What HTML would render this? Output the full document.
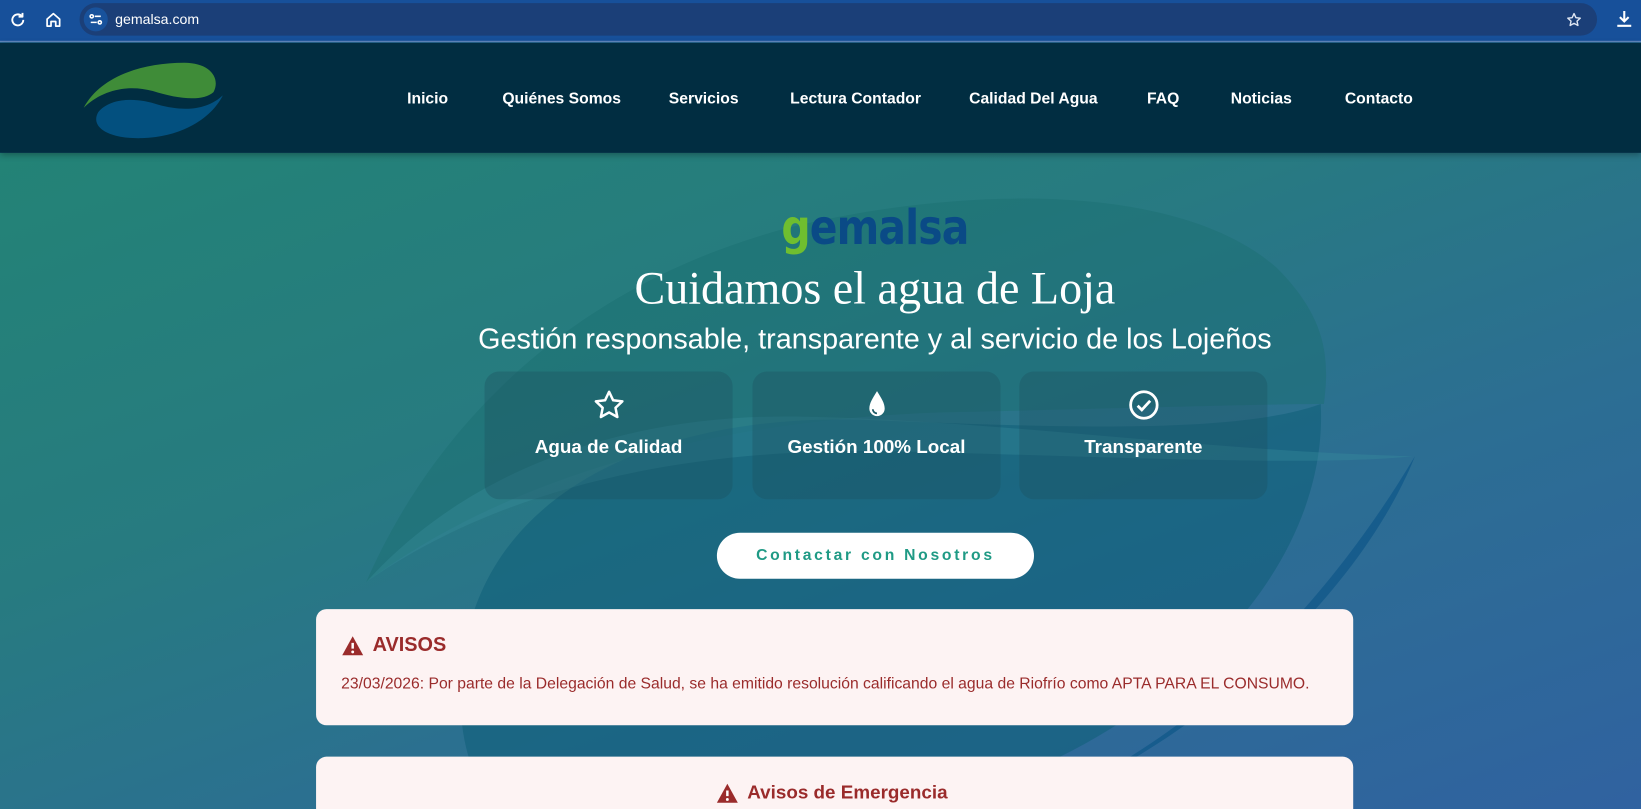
<!DOCTYPE html>
<html><head><meta charset="utf-8">
<style>
*{margin:0;padding:0;box-sizing:border-box}
html,body{width:1641px;height:809px;overflow:hidden}
body{font-family:"Liberation Sans",sans-serif;background:#2b6a95}
.wrap{position:absolute;left:0;top:0;width:1568px;height:773px;transform:scale(1.04656);transform-origin:0 0;overflow:hidden}
.chrome{position:absolute;left:0;top:0;width:1568px;height:40px;background:#17509a;border-bottom:1px solid #6a8fc4}
.url{position:absolute;left:76px;top:3px;width:1450px;height:31px;border-radius:16px;background:#1b3f78}
.url .tune{position:absolute;left:4px;top:4px;width:23px;height:23px;border-radius:12px;background:#18529c}
.url span{position:absolute;left:34px;top:8px;color:#fff;font-size:13.5px}
.nav{position:absolute;left:0;top:41px;width:1568px;height:105px;background:#012d41;box-shadow:0 2px 6px rgba(0,0,0,.3);z-index:3}
.nav a{position:absolute;top:45px;color:#fff;font-weight:bold;font-size:15px;text-decoration:none}
.hero{position:absolute;left:0;top:146px;width:1568px;height:627px;overflow:hidden;background:linear-gradient(160deg,#238376 0%,#277b80 35%,#2c6e93 65%,#3062a0 100%)}
.wm{position:absolute;left:0;top:0}
.brand{position:absolute;left:104px;width:1464px;top:44px;text-align:center;font-size:46px;font-weight:bold;letter-spacing:-1px;font-family:"DejaVu Sans",sans-serif;transform:scaleX(.85)}
h1{position:absolute;left:104px;width:1464px;top:104px;text-align:center;color:#fff;font-family:"Liberation Serif",serif;font-weight:normal;font-size:44px}
h2{position:absolute;left:104px;width:1464px;top:162px;text-align:center;color:#fff;font-weight:normal;font-size:27.5px}
.card{position:absolute;top:209px;width:237px;height:122px;border-radius:14px;background:rgba(30,80,95,.35);text-align:center;color:#fff;font-size:18px;font-weight:bold}
.card svg{position:absolute;left:103px;top:16px}
.card div{position:absolute;left:0;width:100%;top:62px}
.btn{position:absolute;left:685px;top:363px;width:303px;height:44px;border-radius:22px;background:#fff;color:#1f9a85;font-weight:bold;font-size:15px;letter-spacing:2.6px;text-align:center;line-height:44px}
.box{position:absolute;left:302px;width:991px;background:#fdf3f3;border-radius:10px;color:#9a2b2b}
.box h3{font-size:19px;font-weight:bold;position:absolute;left:24px;top:24px;display:flex;align-items:center;gap:8px}
.box p{position:absolute;left:24px;top:63px;font-size:15px;white-space:nowrap}
</style></head><body>
<div class="wrap">
<div class="chrome">
  <svg style="position:absolute;left:8px;top:10px" width="18" height="18" viewBox="0 0 24 24" fill="none" stroke="#fff" stroke-width="2.4"><path d="M19 12a7 7 0 1 1-2.1-5"/><path d="M18 3v5h-5" stroke-linejoin="round"/></svg>
  <svg style="position:absolute;left:42px;top:10px" width="18" height="18" viewBox="0 0 24 24" fill="none" stroke="#fff" stroke-width="2.2"><path d="M4 11l8-7 8 7v9h-5v-6h-6v6H4z" stroke-linejoin="round"/></svg>
  <div class="url"><div class="tune"><svg width="23" height="23" viewBox="0 0 24 24" stroke="#fff" stroke-width="1.6" fill="none"><circle cx="8" cy="9" r="1.6"/><path d="M11 9h6M7 15h6"/><circle cx="16" cy="15" r="1.6"/></svg></div><span>gemalsa.com</span>
  <svg style="position:absolute;right:14px;top:8px" width="16" height="16" viewBox="0 0 24 24" fill="none" stroke="#dfe6f2" stroke-width="2"><path d="M12 3l2.7 5.8 6.3.7-4.7 4.3 1.3 6.2L12 16.9 6.4 20l1.3-6.2L3 9.5l6.3-.7z" stroke-linejoin="round"/></svg></div>
  <svg style="position:absolute;left:1542px;top:8px" width="20" height="20" viewBox="0 0 24 24" fill="none" stroke="#fff" stroke-width="2.4"><path d="M12 3v11M7 10l5 5 5-5M4 20h16"/></svg>
</div>
<div class="nav">
  <svg style="position:absolute;left:76px;top:14px" width="140" height="80" viewBox="0 0 140 80">
    <path d="M4 48 C20 18 60 5 100 5 C125 5 135 20 128 33 C118 42 95 40 70 32 C45 25 20 32 4 48Z" fill="#3f8c38"/>
    <path d="M137 36 C125 60 95 76 60 77 C25 78 10 65 18 52 C30 38 55 38 75 45 C100 52 122 50 137 36Z" fill="#03507f"/>
  </svg>
  <a style="left:389px">Inicio</a><a style="left:480px">Quiénes Somos</a><a style="left:639px">Servicios</a><a style="left:755px">Lectura Contador</a><a style="left:926px">Calidad Del Agua</a><a style="left:1096px">FAQ</a><a style="left:1176px">Noticias</a><a style="left:1285px">Contacto</a>
</div>
<div class="hero">
  <svg class="wm" width="1568" height="627" viewBox="0 0 1568 627">
    <path d="M350 410 C420 250 560 120 760 70 C930 30 1130 30 1220 110 C1270 160 1270 200 1265 240 C1200 240 1050 245 900 248 C700 255 500 300 350 410Z" fill="#1a6f72" opacity=".45"/>
    <path d="M440 520 C440 330 620 250 820 255 C1000 262 1180 270 1262 240 C1270 400 1120 540 960 600 C800 663 620 680 520 663 C470 640 440 590 440 520Z" fill="#0f5f78" opacity=".55"/>
    <path d="M350 410 C450 300 600 250 760 252 C950 255 1150 285 1350 290 C1250 300 1050 290 850 285 C650 282 480 320 350 410Z" fill="#3a8f9f" opacity=".35"/>
    <path d="M1352 290 C1300 420 1150 560 1000 620 C1130 560 1250 460 1352 290Z" fill="#11598a" opacity=".8"/>
  </svg>
  <div class="brand"><span style="color:#6fbe2f">g</span><span style="color:#0a4a86">emalsa</span></div>
  <h1>Cuidamos el agua de Loja</h1>
  <h2>Gestión responsable, transparente y al servicio de los Lojeños</h2>
  <div class="card" style="left:463px"><svg width="32" height="32" viewBox="0 0 24 24" fill="none" stroke="#fff" stroke-width="1.8"><path d="M12 2.5l2.9 6.1 6.6.8-4.9 4.6 1.3 6.6L12 17.3 6.1 20.6l1.3-6.6L2.5 9.4l6.6-.8z" stroke-linejoin="round"/></svg><div>Agua de Calidad</div></div>
  <div class="card" style="left:719px"><svg width="32" height="32" viewBox="0 0 24 24"><path d="M12 2C9 7 6.5 10.5 6.5 14.5a5.5 5.5 0 0 0 11 0C17.5 10.5 15 7 12 2z" fill="#fff"/><path d="M9 15a3 3 0 0 0 3 3" stroke="#1e5a66" stroke-width="1.3" fill="none"/></svg><div>Gestión 100% Local</div></div>
  <div class="card" style="left:974px"><svg width="32" height="32" viewBox="0 0 24 24" fill="none" stroke="#fff" stroke-width="2"><circle cx="12" cy="12" r="9.5"/><path d="M7.5 12.5l3 3 6-6.5"/></svg><div>Transparente</div></div>
  <div class="btn">Contactar con Nosotros</div>
  <div class="box" style="top:436px;height:111px"><h3><svg width="22" height="20" viewBox="0 0 24 22"><path d="M12 1L23 21H1z" fill="#9a2b2b"/><path d="M12 8v6" stroke="#fff" stroke-width="2.6"/><circle cx="12" cy="17.5" r="1.5" fill="#fff"/></svg>AVISOS</h3><p>23/03/2026: Por parte de la Delegación de Salud, se ha emitido resolución calificando el agua de Riofrío como APTA PARA EL CONSUMO.</p></div>
  <div class="box" style="top:577px;height:100px"><h3 style="left:382px;top:24px;font-size:18px"><svg width="22" height="20" viewBox="0 0 24 22"><path d="M12 1L23 21H1z" fill="#9a2b2b"/><path d="M12 8v6" stroke="#fff" stroke-width="2.6"/><circle cx="12" cy="17.5" r="1.5" fill="#fff"/></svg>Avisos de Emergencia</h3></div>
</div>
</div>
</body></html>
